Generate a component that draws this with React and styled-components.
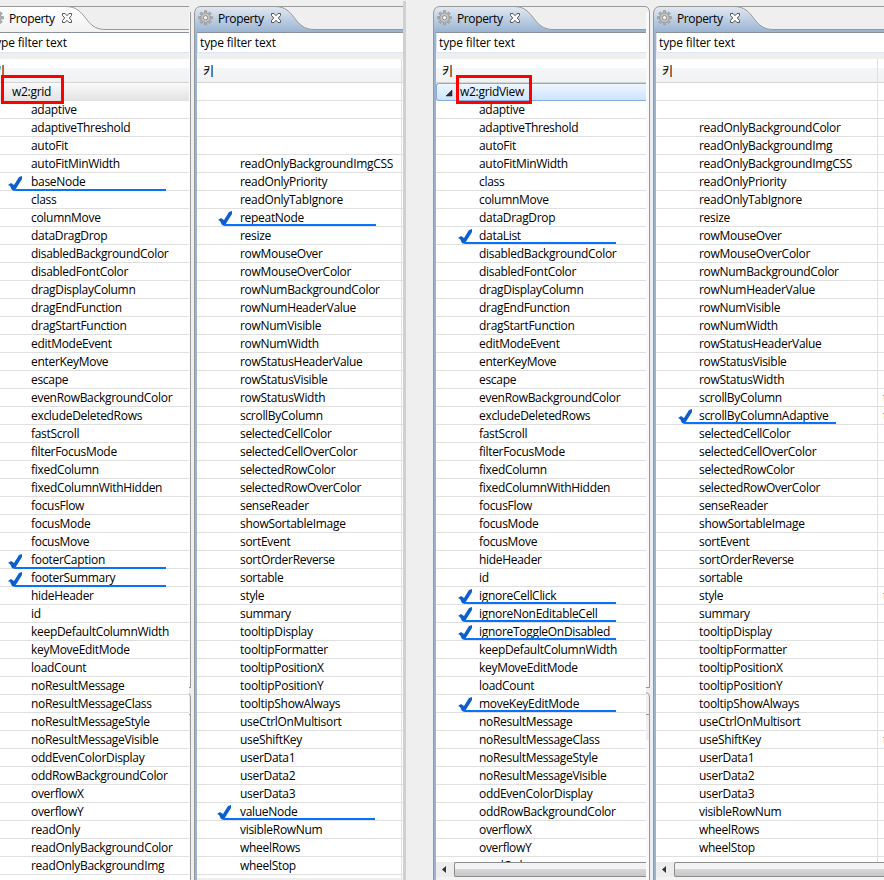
import React from 'react';
import styled, { createGlobalStyle, css } from 'styled-components';

const Global = createGlobalStyle`
  * { box-sizing: border-box; }
  body { margin: 0; background: #efefef; overflow: hidden; }
`;

const GridProps = 'adaptive adaptiveThreshold autoFit autoFitMinWidth baseNode class columnMove dataDragDrop disabledBackgroundColor disabledFontColor dragDisplayColumn dragEndFunction dragStartFunction editModeEvent enterKeyMove escape evenRowBackgroundColor excludeDeletedRows fastScroll filterFocusMode fixedColumn fixedColumnWithHidden focusFlow focusMode focusMove footerCaption footerSummary hideHeader id keepDefaultColumnWidth keyMoveEditMode loadCount noResultMessage noResultMessageClass noResultMessageStyle noResultMessageVisible oddEvenColorDisplay oddRowBackgroundColor overflowX overflowY readOnly readOnlyBackgroundColor readOnlyBackgroundImg'.split(' ');
const GridMore = 'readOnlyBackgroundImgCSS readOnlyPriority readOnlyTabIgnore repeatNode resize rowMouseOver rowMouseOverColor rowNumBackgroundColor rowNumHeaderValue rowNumVisible rowNumWidth rowStatusHeaderValue rowStatusVisible rowStatusWidth scrollByColumn selectedCellColor selectedCellOverColor selectedRowColor selectedRowOverColor senseReader showSortableImage sortEvent sortOrderReverse sortable style summary tooltipDisplay tooltipFormatter tooltipPositionX tooltipPositionY tooltipShowAlways useCtrlOnMultisort useShiftKey userData1 userData2 userData3 valueNode visibleRowNum wheelRows wheelStop'.split(' ');
const ViewProps = 'adaptive adaptiveThreshold autoFit autoFitMinWidth class columnMove dataDragDrop dataList disabledBackgroundColor disabledFontColor dragDisplayColumn dragEndFunction dragStartFunction editModeEvent enterKeyMove escape evenRowBackgroundColor excludeDeletedRows fastScroll filterFocusMode fixedColumn fixedColumnWithHidden focusFlow focusMode focusMove hideHeader id ignoreCellClick ignoreNonEditableCell ignoreToggleOnDisabled keepDefaultColumnWidth keyMoveEditMode loadCount moveKeyEditMode noResultMessage noResultMessageClass noResultMessageStyle noResultMessageVisible oddEvenColorDisplay oddRowBackgroundColor overflowX overflowY readOnly'.split(' ');
const ViewMore = 'readOnlyBackgroundColor readOnlyBackgroundImg readOnlyBackgroundImgCSS readOnlyPriority readOnlyTabIgnore resize rowMouseOver rowMouseOverColor rowNumBackgroundColor rowNumHeaderValue rowNumVisible rowNumWidth rowStatusHeaderValue rowStatusVisible rowStatusWidth scrollByColumn scrollByColumnAdaptive selectedCellColor selectedCellOverColor selectedRowColor selectedRowOverColor senseReader showSortableImage sortEvent sortOrderReverse sortable style summary tooltipDisplay tooltipFormatter tooltipPositionX tooltipPositionY tooltipShowAlways useCtrlOnMultisort useShiftKey userData1 userData2 userData3 visibleRowNum wheelRows wheelStop'.split(' ');

const Screen = styled.main`
  display: flex;
  width: 884px;
  height: 880px;
  overflow: hidden;
  background: #efefef;
  color: #000;
  font: 12px/18px 'Open Sans', 'Noto Sans', 'Noto Sans CJK KR', sans-serif;
  letter-spacing: -0.3px;
  white-space: nowrap;
`;
const Pane = styled.section`
  display: flex;
  flex: none;
  flex-direction: column;
  width: ${(p) => p.$width}px;
  height: 880px;
  margin-left: ${(p) => p.$before || 0}px;
`;
const TabBar = styled.header`
  display: grid;
  flex: none;
  height: 33px;
  > * { grid-area: 1 / 1; }
`;
const TabContent = styled.div`
  display: flex;
  z-index: 1;
  padding: 10px 0 0 4px;
  height: 28px;
  > span { width: 52px; margin-left: 5px; line-height: 18px; letter-spacing: -0.38px; }
  > svg { flex: none; }
`;
const Body = styled.div`
  display: flex;
  flex: 1;
  min-height: 0;
`;
const LeftEdge = styled.div`
  flex: none;
  width: 3px;
  background: #9ab3d2;
  border-left: 1px solid #94979c;
`;
const Content = styled.div`
  display: flex;
  flex: none;
  flex-direction: column;
  width: ${(p) => p.$width}px;
  overflow: ${(p) => (p.$clip ? 'hidden' : 'visible')};
`;
const RightEdge = styled.div`
  position: relative;
  flex: none;
  width: ${(p) => p.$width}px;
  border-right: ${(p) => (p.$bar ? '3px solid #d0d0d0' : '1px solid #999')};
  margin-top: ${(p) => (p.$bar ? -32 : -21)}px;
  background: ${(p) => (p.$bar ? 'transparent' : '#fafafa')};
  z-index: 2;
`;
const NotchArt = styled.svg`
  position: absolute;
  right: -1px;
  top: 674px;
`;
const Filter = styled.div`
  flex: none;
  height: 20px;
  padding-left: 2px;
  background: #fff;
  border-bottom: 1px solid #dce6f2;
  border-left: 1px solid #dce6f2;
  line-height: 19px;
  letter-spacing: -0.15px;
`;
const KeyHeader = styled.div`
  display: flex;
  flex: none;
  height: 24px;
  margin-top: 6px;
  padding-left: 6px;
  border-bottom: 1px solid #d5d5d5;
  background: linear-gradient(#fff 0 9px, #f5f6f7 9px, #f1f2f4);
  line-height: 23px;
  font-family: 'Noto Sans CJK KR', sans-serif;
  font-size: 12px;
`;
const Rows = styled.div`
  flex: 1;
  min-height: 0;
  background: #fff;
  overflow: ${(p) => (p.$clip ? 'hidden' : 'visible')};
`;
const Row = styled.div`
  position: relative;
  display: flex;
  height: 18px;
  padding-left: 43px;
  border-bottom: 1px solid #dfdfdf;
  line-height: 17px;
`;
const RootRow = styled(Row)`
  padding-left: 24px;
  ${(p) => p.$tone === 'blue' && css`
    background: linear-gradient(#eff6ff, #cde4fe);
    border: 1px solid #84acdd;
    border-right: 0;
    border-radius: 3px 0 0 3px;
    padding-left: 23px;
    line-height: 16px;
  `}
  ${(p) => p.$tone === 'grey' && css`background: linear-gradient(#f9f9f9, #e4e4e4);`}
`;
const Arrow = styled.svg`
  position: absolute;
  left: 8px;
  top: 6px;
`;
const RedBox = styled.div`
  position: absolute;
  z-index: 3;
  left: ${(p) => p.$left}px;
  top: ${(p) => p.$top}px;
  width: ${(p) => p.$width}px;
  height: 29px;
  border: 3px solid #fe0000;
`;
const Mark = styled.svg`
  position: absolute;
  z-index: 2;
  left: ${(p) => 22 + p.$dx}px;
  top: ${(p) => 2 + p.$dy}px;
`;
const Columns = styled.div`
  display: grid;
  grid-template-columns: ${(p) => p.$key}px minmax(0, 1fr);
  flex: 1;
  min-height: 0;
`;
const Value = styled.div`
  height: 18px;
  padding-left: 5px;
  border-left: 1px solid #e2e2e2;
  border-bottom: 1px solid #dfdfdf;
  color: #7a4a20;
  line-height: 17px;
`;
const BlankValue = styled(Value)`
  padding: 0;
`;
const HeaderRow = styled.div`
  display: grid;
  flex: none;
  grid-template-columns: ${(p) => p.$key}px minmax(0, 1fr);
`;
const HeaderRest = styled(KeyHeader)`
  padding: 0;
  border-left: 1px solid #e0e0e0;
`;
const Scroll = styled.div`
  display: flex;
  flex: none;
  height: 18px;
  border-bottom: 3px solid #f3f3f3;
  background: #ededed;
  > svg { flex: none; }
`;
const Thumb = styled.div`
  flex: 1;
  height: 15px;
  border: 1px solid #8d8d8d;
  border-right: 0;
  border-radius: 2px 0 0 2px;
  background: linear-gradient(#f3f3f3 0 45%, #d6d6d8 50%, #c7c7cb);
`;
const Strip = styled.div`
  flex: none;
  height: 2px;
  background: #efefef;
`;

const teeth = [0, 45, 90, 135, 180, 225, 270, 315];
function Gear() {
  return (
    <svg width="15" height="16" viewBox="0 0 15 16">
      <g transform="translate(7.5 7.7)">
        {teeth.map((a) => <rect key={a} x="-1.2" y="-7.1" width="2.4" height="4" rx=".5" fill="#b0b0b0" stroke="#8d8d8d" strokeWidth=".6" transform={`rotate(${a})`} />)}
        <circle r="4.6" fill="#c9c9c9" stroke="#929292" strokeWidth=".7" />
        <circle r="2.2" fill="#eef0f3" stroke="#858585" strokeWidth=".9" />
      </g>
    </svg>
  );
}
function Close() {
  return (
    <svg width="12" height="16" viewBox="0 0 12 16">
      <path d="M1.5 3.5H4L6 5.7L8 3.5H10.5V5.5L8.3 8L10.5 10.5V12.5H8L6 10.3L4 12.5H1.5V10.5L3.7 8L1.5 5.5Z" fill="#fff" stroke="#555" />
    </svg>
  );
}
function Tab({ width, active, id, rounded }) {
  const end = rounded ? `H${width - 8}Q${width - 4} 6.5 ${width - 3.5} 12` : `H${width}`;
  return (
    <TabBar>
      <svg width={width} height="33">
        <defs>
          <linearGradient id={id} x2="0" y2="1">
            <stop offset="0" stopColor={active ? '#e1e9f2' : '#fff'} />
            <stop offset="1" stopColor={active ? '#98b2d1' : '#f1f1f1'} />
          </linearGradient>
        </defs>
        <path d="M.5 33V13Q1 6.5 7 6.5H81C102 6.5 99 29.5 120 29.5V33Z" fill={`url(#${id})`} />
        <path d={`M119 30H${width - (rounded ? 7 : 0)}V33H119Z`} fill={active ? '#9ab3d2' : '#f5f5f5'} />
        <path d={`M.5 33V13Q1 6.5 7 6.5${end}`} fill="none" stroke="#999" />
        <path d={`M81 6.5C102 6.5 99 29.5 120 29.5H${width - (rounded ? 4 : 0)}`} fill="none" stroke="#999" />
        <path d={`M3 32.5H${width - (rounded ? 7 : 0)}`} stroke="#8c9299" />
      </svg>
      <TabContent><Gear /><span>Property</span><Close /></TabContent>
    </TabBar>
  );
}
function Notch({ width }) {
  return (
    <NotchArt width={width} height="54" viewBox={`${4 - width} 0 ${width} 54`}>
      <path d="M0 2H4V54H0Z" fill="#efefef" />
      <path d="M0 1.5H4M0 6.5Q3.5 7 3.5 12V54M0 28.5H4" fill="none" stroke="#999" />
    </NotchArt>
  );
}
function Check({ dx = 0, dy = 0 }) {
  return (
    <Mark $dx={dx} $dy={dy} width="160" height="16">
      <path d="M0 9L3 7L6 9L11 1L14 0V3L9 11L6.5 15L4 14L2 10Z" fill="#0b5fce" />
      <path d="M6.5 14H158" stroke="#0872fb" strokeWidth="2" />
    </Mark>
  );
}
function Names({ items, marks = [], dx, dy }) {
  return items.map((name, i) => (
    <Row key={i}>{marks.includes(name) && <Check dx={name === 'valueNode' ? dx - 1 : dx} dy={dy} />}{name}</Row>
  ));
}
function ScrollBar() {
  return (
    <Scroll>
      <svg width="18" height="15"><path d="M10 4V11L6 7.5Z" fill="#333" /></svg>
      <Thumb />
    </Scroll>
  );
}

export default function App() {
  return (
    <>
      <Global />
      <Screen>
        <Pane $width={209} $before={-15}>
          <Tab width={204} id="tab-a" />
          <Body>
            <LeftEdge />
            <Content $width={201}>
              <Filter>type filter text</Filter>
              <KeyHeader>키</KeyHeader>
              <Rows>
                <RootRow $tone="grey">w2:grid<RedBox $left={13} $top={-8} $width={63} /></RootRow>
                <Names items={[...GridProps, '']} marks={['baseNode', 'footerCaption', 'footerSummary']} dx={-2} dy={1} />
              </Rows>
            </Content>
            <RightEdge $width={2}><Notch width={2} /></RightEdge>
          </Body>
        </Pane>
        <Pane $width={239}>
          <Tab width={209} active id="tab-b" />
          <Body>
            <LeftEdge />
            <Content $width={206}>
              <Filter>type filter text</Filter>
              <HeaderRow $key={204}><KeyHeader>키</KeyHeader><HeaderRest /></HeaderRow>
              <Columns $key={204}>
                <Rows $clip>
                  <Names items={['', '', '', '', ...GridMore, '']} marks={['repeatNode', 'valueNode']} dx={-1} dy={0} />
                </Rows>
                <Rows $clip>{Array.from({ length: 45 }, (_, i) => <BlankValue key={i} />)}</Rows>
              </Columns>
              <Strip />
            </Content>
            <RightEdge $width={3} $bar />
          </Body>
        </Pane>
        <Pane $width={220}>
          <Tab width={220} active id="tab-c" rounded />
          <Body>
            <LeftEdge />
            <Content $width={210}>
              <Filter>type filter text</Filter>
              <KeyHeader>키</KeyHeader>
              <RootRow $tone="blue">
                <Arrow width="8" height="8"><path d="M7 0V6H1Z" fill="#333" stroke="#111" strokeWidth=".5" /></Arrow>
                w2:gridView<RedBox $left={19} $top={-9} $width={76} />
              </RootRow>
              <Rows $clip>
                <Names items={ViewProps} marks={['dataList', 'ignoreCellClick', 'ignoreNonEditableCell', 'ignoreToggleOnDisabled', 'moveKeyEditMode']} dx={0} dy={0} />
              </Rows>
              <ScrollBar />
            </Content>
            <RightEdge $width={4}><Notch width={4} /></RightEdge>
          </Body>
        </Pane>
        <Pane $width={231}>
          <Tab width={231} active id="tab-d" />
          <Body>
            <LeftEdge />
            <Content $width={228} $clip>
              <Filter>type filter text</Filter>
              <HeaderRow $key={221}><KeyHeader>키</KeyHeader><HeaderRest /></HeaderRow>
              <Columns $key={221}>
                <Rows $clip><Names items={['', '', ...ViewMore, '']} marks={['scrollByColumnAdaptive']} dx={0} dy={0} /></Rows>
                <Rows $clip>{Array.from({ length: 44 }, (_, i) => <Value key={i}>{[17, 18, 28, 36].includes(i) ? 't' : ''}</Value>)}</Rows>
              </Columns>
              <ScrollBar />
            </Content>
          </Body>
        </Pane>
      </Screen>
    </>
  );
}
